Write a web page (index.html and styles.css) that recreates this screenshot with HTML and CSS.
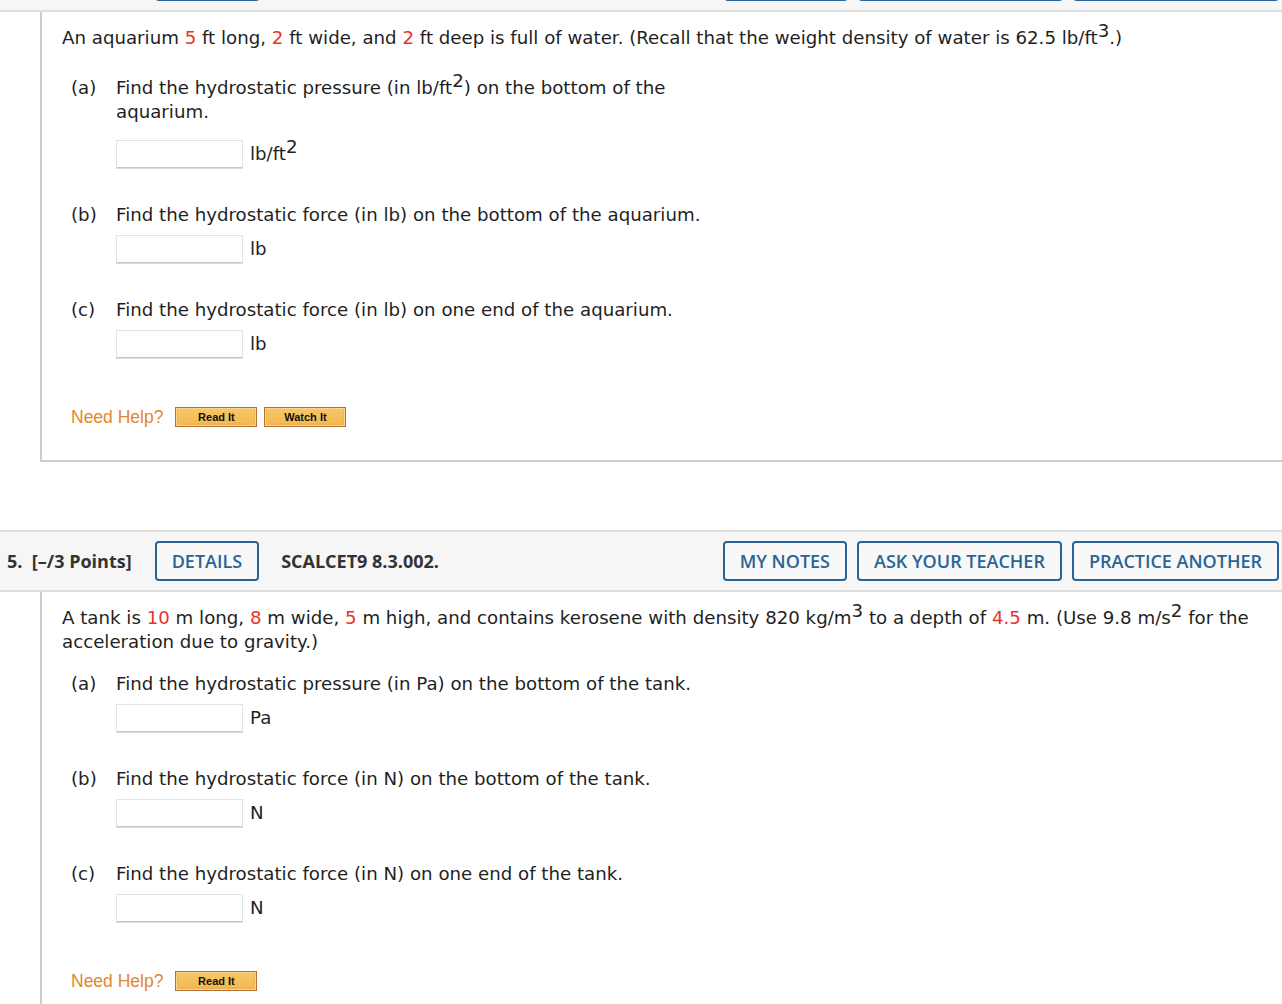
FILE: index.html
```html
<!DOCTYPE html>
<html>
<head>
<meta charset="utf-8">
<link rel="stylesheet" href="styles.css">
</head>
<body>
<div class="qhead qhead-prev">
  <span class="qbtn-blank w-details"></span>
  <span class="spacer"></span>
  <span class="qbtn-blank w-notes"></span>
  <span class="qbtn-blank w-ask"></span>
  <span class="qbtn-blank w-practice"></span>
</div>

<div class="qbody qbody-first">
  <p class="intro">An aquarium <span class="num">5</span> ft long, <span class="num">2</span> ft wide, and <span class="num">2</span> ft deep is full of water. (Recall that the weight density of water is 62.5 lb/ft<sup>3</sup>.)</p>
  <div class="part part-sup">
    <div class="label">(a)</div>
    <div class="ptext">Find the hydrostatic pressure (in lb/ft<sup>2</sup>) on the bottom of the<br>aquarium.</div>
  </div>
  <div class="answer answer-sup"><span class="field"></span><span class="unit">lb/ft<sup>2</sup></span></div>
  <div class="part">
    <div class="label">(b)</div>
    <div class="ptext">Find the hydrostatic force (in lb) on the bottom of the aquarium.</div>
  </div>
  <div class="answer"><span class="field"></span><span class="unit">lb</span></div>
  <div class="part">
    <div class="label">(c)</div>
    <div class="ptext">Find the hydrostatic force (in lb) on one end of the aquarium.</div>
  </div>
  <div class="answer"><span class="field"></span><span class="unit">lb</span></div>
  <div class="help">
    <span class="help-title">Need Help?</span>
    <button class="hbtn">Read It</button>
    <button class="hbtn">Watch It</button>
  </div>
</div>

<div class="qhead">
  <span class="qnum">5.&nbsp; [–/3 Points]</span>
  <button class="qbtn qbtn-details">DETAILS</button>
  <span class="qcode">SCALCET9 8.3.002.</span>
  <span class="spacer"></span>
  <button class="qbtn">MY NOTES</button>
  <button class="qbtn">ASK YOUR TEACHER</button>
  <button class="qbtn">PRACTICE ANOTHER</button>
</div>

<div class="qbody">
  <p class="intro">A tank is <span class="num">10</span> m long, <span class="num">8</span> m wide, <span class="num">5</span> m high, and contains kerosene with density 820 kg/m<sup>3</sup> to a depth of <span class="num">4.5</span> m. (Use 9.8 m/s<sup>2</sup> for the<br>acceleration due to gravity.)</p>
  <div class="part">
    <div class="label">(a)</div>
    <div class="ptext">Find the hydrostatic pressure (in Pa) on the bottom of the tank.</div>
  </div>
  <div class="answer"><span class="field"></span><span class="unit">Pa</span></div>
  <div class="part">
    <div class="label">(b)</div>
    <div class="ptext">Find the hydrostatic force (in N) on the bottom of the tank.</div>
  </div>
  <div class="answer"><span class="field"></span><span class="unit">N</span></div>
  <div class="part">
    <div class="label">(c)</div>
    <div class="ptext">Find the hydrostatic force (in N) on one end of the tank.</div>
  </div>
  <div class="answer"><span class="field"></span><span class="unit">N</span></div>
  <div class="help">
    <span class="help-title">Need Help?</span>
    <button class="hbtn">Read It</button>
  </div>
</div>
</body>
</html>
```

FILE: styles.css
```css
html, body {
  margin: 0;
  padding: 0;
  background: #ffffff;
}
body {
  font-family: "DejaVu Sans", Verdana, sans-serif;
  font-size: 18.2px;
  color: #1f1f1f;
  overflow: hidden;
}

/* question header bar */
.qhead {
  display: flex;
  align-items: center;
  height: 58px;
  padding: 0 3px 0 7px;
  background: #f6f6f6;
  border-top: 2px solid #dddddd;
  border-bottom: 2px solid #dddddd;
  font-family: "Open Sans", "Liberation Sans", sans-serif;
  margin-top: 68px;
}
.qhead-prev {
  margin-top: -50px;
}
.qnum, .qcode {
  font-weight: 700;
  font-size: 18px;
  color: #333333;
  white-space: nowrap;
}
.qbtn {
  height: 40px;
  padding: 0 15px;
  border: 2px solid #2a6496;
  border-radius: 4px;
  background: #f8f8f8;
  color: #2a6496;
  font-family: "Open Sans", "Liberation Sans", sans-serif;
  font-weight: 600;
  font-size: 18px;
  white-space: nowrap;
  margin-left: 10px;
}
.qbtn-details {
  margin-left: 23px;
  margin-right: 22px;
}
.qbtn-blank {
  display: block;
  height: 40px;
  box-sizing: border-box;
  border: 2px solid #2a6496;
  border-radius: 4px;
  background: #f8f8f8;
  margin-left: 10px;
}
.w-details { width: 105px; margin-left: 148px; }
.w-notes { width: 124px; }
.w-ask { width: 205px; }
.w-practice { width: 206px; }
.spacer {
  flex: 1;
}

/* question body */
.qbody {
  margin-left: 40px;
  border-left: 2px solid #cccccc;
  padding: 14px 0 33px 20px;
  line-height: 24px;
}
.qbody-first {
  border-bottom: 2px solid #cccccc;
}
.intro {
  margin: 0 0 18px 0;
  white-space: nowrap;
}
.num {
  color: #e8352b;
}
sup {
  font-size: 100%;
  line-height: 0;
  vertical-align: 7px;
}
.part {
  display: flex;
  margin-left: 9px;
}
.part-sup {
  padding-top: 8px;
}
.label {
  width: 45px;
  flex: none;
}
.answer {
  display: flex;
  align-items: center;
  margin: 8px 0 35px 54px;
  height: 28px;
}
.answer-sup {
  margin-top: 16px;
}
.field {
  display: block;
  width: 125px;
  height: 26px;
  border: 1px solid #e3e3e3;
  border-bottom-color: #c8c8c8;
  box-shadow: 0 1px 0 #dcdcdc;
  background: #ffffff;
}
.unit {
  margin-left: 7px;
}

/* need help row */
.help {
  display: flex;
  align-items: center;
  margin: 49px 0 0 9px;
  height: 20px;
}
.help-title {
  font-family: "Liberation Sans", Arial, sans-serif;
  font-size: 17.5px;
  color: #e3872d;
  margin-right: 12px;
}
.hbtn {
  width: 82px;
  height: 20px;
  padding: 0;
  margin-right: 7px;
  border: 1px solid #b27035;
  box-shadow: inset 0 0 0 1px #f9d690, inset 0 -1px 0 2px #f2b451;
  background: linear-gradient(#f7c666, #f3b852);
  font-family: "Liberation Sans", Arial, sans-serif;
  font-weight: 700;
  font-size: 11px;
  color: #111111;
  line-height: 16px;
}
```
